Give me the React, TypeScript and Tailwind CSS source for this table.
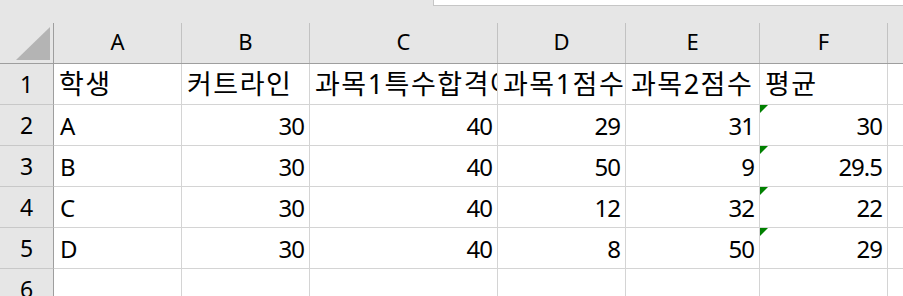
import React from "react";

const cols = ["A", "B", "C", "D", "E", "F", ""];
const colW = [128, 128, 188, 128, 134, 128, 40];

type Cell = { v: string; num?: boolean; flag?: boolean };

const rows: Cell[][] = [
  [{ v: "학생" }, { v: "커트라인" }, { v: "과목1특수합격여부" }, { v: "과목1점수" }, { v: "과목2점수" }, { v: "평균" }, { v: "" }],
  [{ v: "A" }, { v: "30", num: true }, { v: "40", num: true }, { v: "29", num: true }, { v: "31", num: true }, { v: "30", num: true, flag: true }, { v: "" }],
  [{ v: "B" }, { v: "30", num: true }, { v: "40", num: true }, { v: "50", num: true }, { v: "9", num: true }, { v: "29.5", num: true, flag: true }, { v: "" }],
  [{ v: "C" }, { v: "30", num: true }, { v: "40", num: true }, { v: "12", num: true }, { v: "32", num: true }, { v: "22", num: true, flag: true }, { v: "" }],
  [{ v: "D" }, { v: "30", num: true }, { v: "40", num: true }, { v: "8", num: true }, { v: "50", num: true }, { v: "29", num: true, flag: true }, { v: "" }],
  [{ v: "" }, { v: "" }, { v: "" }, { v: "" }, { v: "" }, { v: "" }, { v: "" }],
];

const font = { fontFamily: '"Noto Sans", "Noto Sans CJK KR", sans-serif' };

export default function App() {
  return (
    <div className="w-[903px] h-[296px] overflow-hidden bg-white text-black" style={font}>
      {/* top strip */}
      <div className="h-[23px] bg-[#e6e6e6] flex">
        <div className="w-[433px]" />
        <div className="flex-1 h-[6px] bg-white border-l border-b border-[#c6c6c6]" />
      </div>
      {/* column header row */}
      <div className="flex h-[41px] bg-[#e6e6e6] border-b border-[#9e9e9e]">
        <div className="w-[54px] shrink-0 h-full border-r border-[#9e9e9e] flex items-end justify-end pr-[3px] pb-[3px]">
          <svg width="34" height="33" viewBox="0 0 34 33">
            <polygon points="0,33 34,33 34,0" fill="#b4b4b4" />
          </svg>
        </div>
        {cols.map((c, i) => (
          <div
            key={i}
            style={{ width: colW[i] }}
            className="shrink-0 h-full border-r border-[#c2c2c2] text-center text-[22px] leading-[36px]"
          >
            {c}
          </div>
        ))}
      </div>
      {rows.map((r, ri) => (
        <div key={ri} className="flex h-[41px]">
          <div className="w-[54px] shrink-0 h-full bg-[#e6e6e6] border-r border-b border-r-[#9e9e9e] border-b-[#c8c8c8] text-center text-[23px] leading-[41px]">
            {ri + 1}
          </div>
          {r.map((c, ci) => (
            <div
              key={ci}
              style={{ width: colW[ci] }}
              className={
                "relative shrink-0 h-full border-r border-b border-[#d4d4d4] overflow-hidden whitespace-nowrap " +
                (ri === 0 ? "text-[27px] leading-[40px] tracking-[1.5px] pl-[5px]" : "text-[24px] leading-[41px] tracking-[-1px] ") +
                (c.num ? "text-right pr-[5px]" : ri === 0 ? "" : "pl-[6px]")
              }
            >
              {c.flag && (
                <div className="absolute left-0 top-0 w-0 h-0 border-t-[8px] border-r-[8px] border-t-[#008000] border-r-transparent" />
              )}
              {c.v}
            </div>
          ))}
        </div>
      ))}
    </div>
  );
}
